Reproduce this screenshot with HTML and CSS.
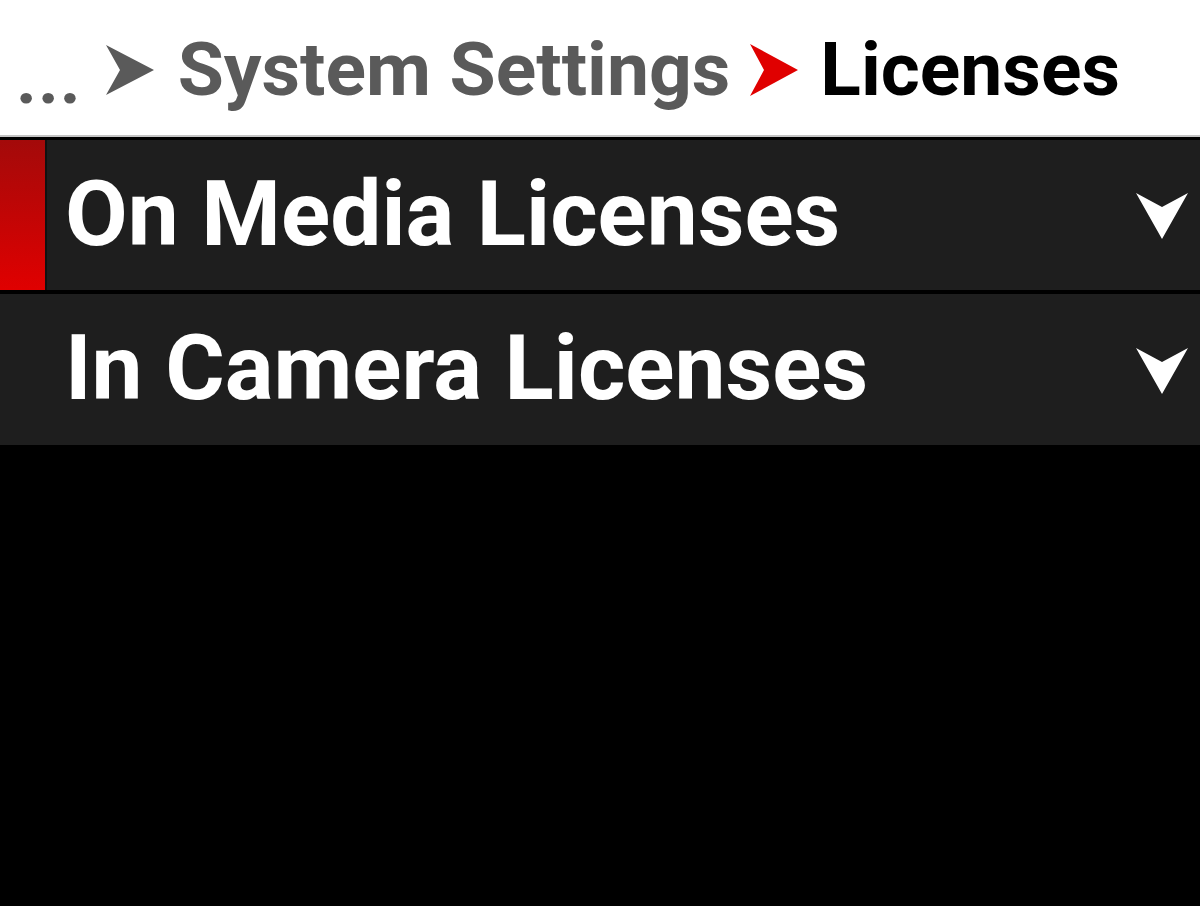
FILE: index.html
```html
<!DOCTYPE html>
<html>
<head>
<meta charset="utf-8">
<link rel="stylesheet" href="styles.css">
</head>
<body>
<header class="crumbs">
  <span class="dots">...</span>
  <svg class="sep" viewBox="0 0 48 50" width="48" height="50"><path d="M0 0 L48 25 L0 50 L14 25 Z" fill="#5a5a5a"/></svg>
  <span class="parent">System Settings</span>
  <svg class="sep red" viewBox="0 0 48 52" width="48" height="52"><path d="M0 0 L48 26 L0 52 L14 26 Z" fill="#e00000"/></svg>
  <span class="current">Licenses</span>
</header>
<main class="list">
  <div class="row active">
    <div class="marker"></div>
    <span class="label">On Media Licenses</span>
    <svg class="chev" viewBox="0 0 52 46" width="52" height="46"><path d="M0 0 L26 14 L52 0 L26 46 Z" fill="#fff"/></svg>
  </div>
  <div class="row">
    <div class="marker"></div>
    <span class="label">In Camera Licenses</span>
    <svg class="chev" viewBox="0 0 52 46" width="52" height="46"><path d="M0 0 L26 14 L52 0 L26 46 Z" fill="#fff"/></svg>
  </div>
</main>
</body>
</html>
```
FILE: styles.css
```css
html, body {
  margin: 0;
  padding: 0;
  background: #000;
  height: 100%;
}
body {
  font-family: Roboto, "Liberation Sans", sans-serif;
  font-weight: 700;
}
.crumbs {
  height: 137px;
  background: #fff;
  border-bottom: 2px solid #c4c4c4;
  margin-bottom: 3px;
  display: flex;
  align-items: center;
  padding-left: 16px;
  padding-top: 4px;
  box-sizing: border-box;
  font-size: 75px;
  line-height: 1;
  white-space: nowrap;
}
.dots {
  color: #5a5a5a;
  font-size: 72px;
  letter-spacing: 1px;
  margin-top: 18px;
}
.sep {
  flex: none;
  margin: 0 24px 0 24px;
}
.sep.red {
  margin: 0 22px 0 20px;
}
.parent {
  color: #5a5a5a;
}
.current {
  color: #000;
}
.list {
  display: flex;
  flex-direction: column;
  gap: 4px;
}
.row {
  height: 150px;
  background: #1e1e1e;
  display: flex;
  align-items: center;
  color: #fff;
  font-size: 91px;
  line-height: 1;
  white-space: nowrap;
}
.row + .row {
  height: 151px;
}
.marker {
  width: 45px;
  align-self: stretch;
  flex: none;
  margin-right: 20px;
}
.row.active .marker {
  background: linear-gradient(#a30a0a, #e00000);
  border-right: 2px solid #111;
  margin-right: 18px;
}
.label {
  flex: 1;
  padding-bottom: 2px;
}
.chev {
  flex: none;
  margin-right: 12px;
  margin-top: 2px;
}
```
